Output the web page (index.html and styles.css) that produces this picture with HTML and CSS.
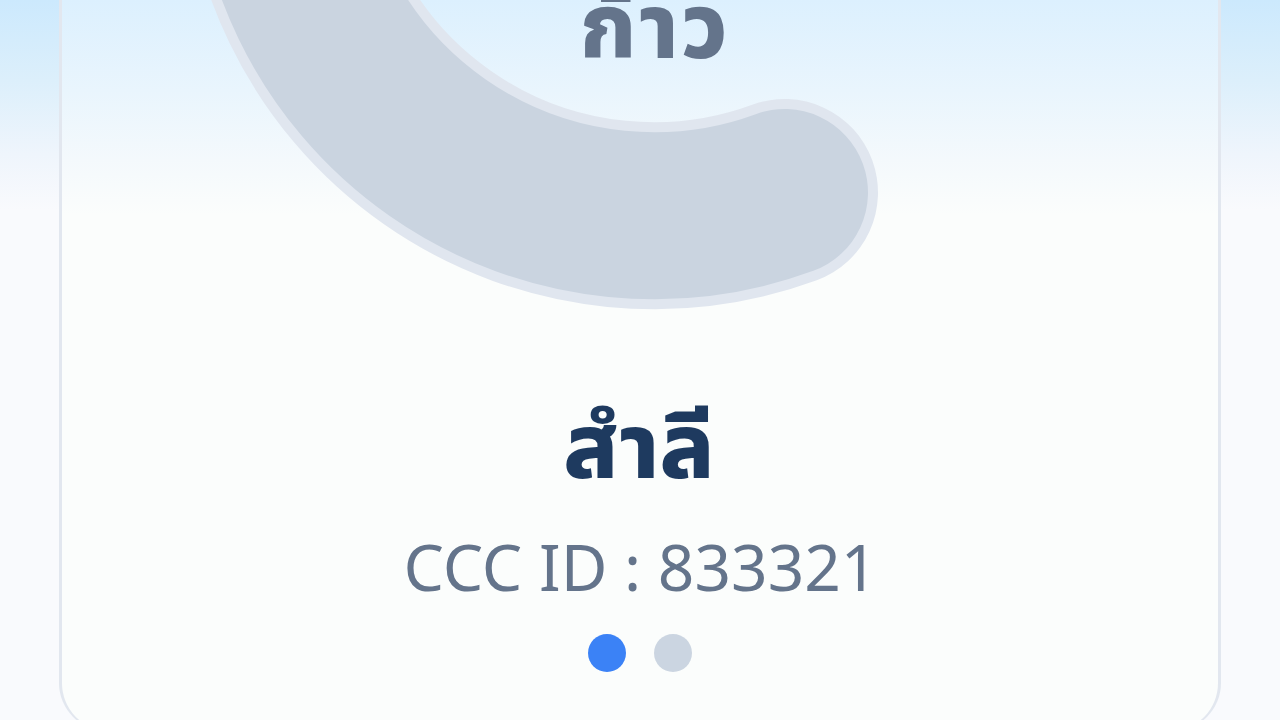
FILE: index.html
```
<!DOCTYPE html>
<html lang="th">
<head>
  <meta charset="utf-8">
  <meta name="viewport" content="width=device-width, initial-scale=1">
  <title>CCC Steps</title>
  <link rel="stylesheet" href="styles.css">
</head>
<body>

  <main class="card">
    <div class="gauge">
      <svg class="gauge-ring" viewBox="0 0 1160 320" aria-hidden="true">
        <path class="ring-edge" d="M216 -162.7 A378 378 0 0 0 724.5 192.5"/>
        <path class="ring-track" d="M216 -162.7 A378 378 0 0 0 724.5 192.5"/>
      </svg>
      <span class="gauge-unit">ก้าว</span>
    </div>

    <h1 class="name">สำลี</h1>
    <p class="member-id">CCC ID : 833321</p>

    <div class="dots">
      <span class="dot active"></span>
      <span class="dot"></span>
    </div>
  </main>

</body>
</html>
```
FILE: styles.css
```
*, *::before, *::after { box-sizing: border-box }

body {
  font-family: "Noto Sans", sans-serif;
  margin: 0;
  height: 720px;
  padding: 0 59px;
  overflow: hidden;
  background: linear-gradient(#cce9fd, #dceffb 80px, #eff5fc 155px, #f9fafd 210px);
}

.card {
  height: 731px;
  border: 3px solid #e2e7ef;
  border-top: none;
  border-bottom-width: 1px;
  border-radius: 0 0 48px 48px;
  background: linear-gradient(#dcf0fe, #e9f5fd 90px, #f4f9fc 160px, #fbfdfc 215px);
  display: flex;
  flex-direction: column;
  align-items: center;
}


/*///////////// Gauge */

.gauge {
  display: grid;
  width: 1160px;
  height: 320px;
  flex: none;
}

.gauge-ring,
.gauge-unit {
  grid-area: 1 / 1;
}

.gauge-ring {
  width: 1160px;
  height: 320px;
}

.ring-edge,
.ring-track {
  fill: none;
  stroke: #e0e6ef;
  stroke-width: 187;
  stroke-linecap: round;
}

.ring-track {
  stroke: #cad4e0;
  stroke-width: 167;
}

.gauge-unit,
.name {
  font-family: "Noto Sans Thai", "Noto Sans", sans-serif;
  font-size: 91px;
  font-weight: 800;
  line-height: 120px;
}

.gauge-unit {
  justify-self: center;
  font-size: 90px;
  letter-spacing: 2px;
  margin: -29px 0 0 29px;
  color: #64748b;
}


/*///////////// Member */

.name {
  margin: 70px 0 0;
  padding-right: 2px;
  color: #1e3a5f;
}

.member-id {
  margin: 12px 0 0;
  padding-left: 1px;
  font-size: 64px;
  line-height: 90px;
  color: #64748b;
}

.dots {
  display: flex;
  gap: 28px;
  margin-top: 22px;
}

.dot {
  width: 38px;
  height: 38px;
  border-radius: 50%;
  background: #cbd5e1;
}

.dot.active {
  background: #3b82f6;
}
```
